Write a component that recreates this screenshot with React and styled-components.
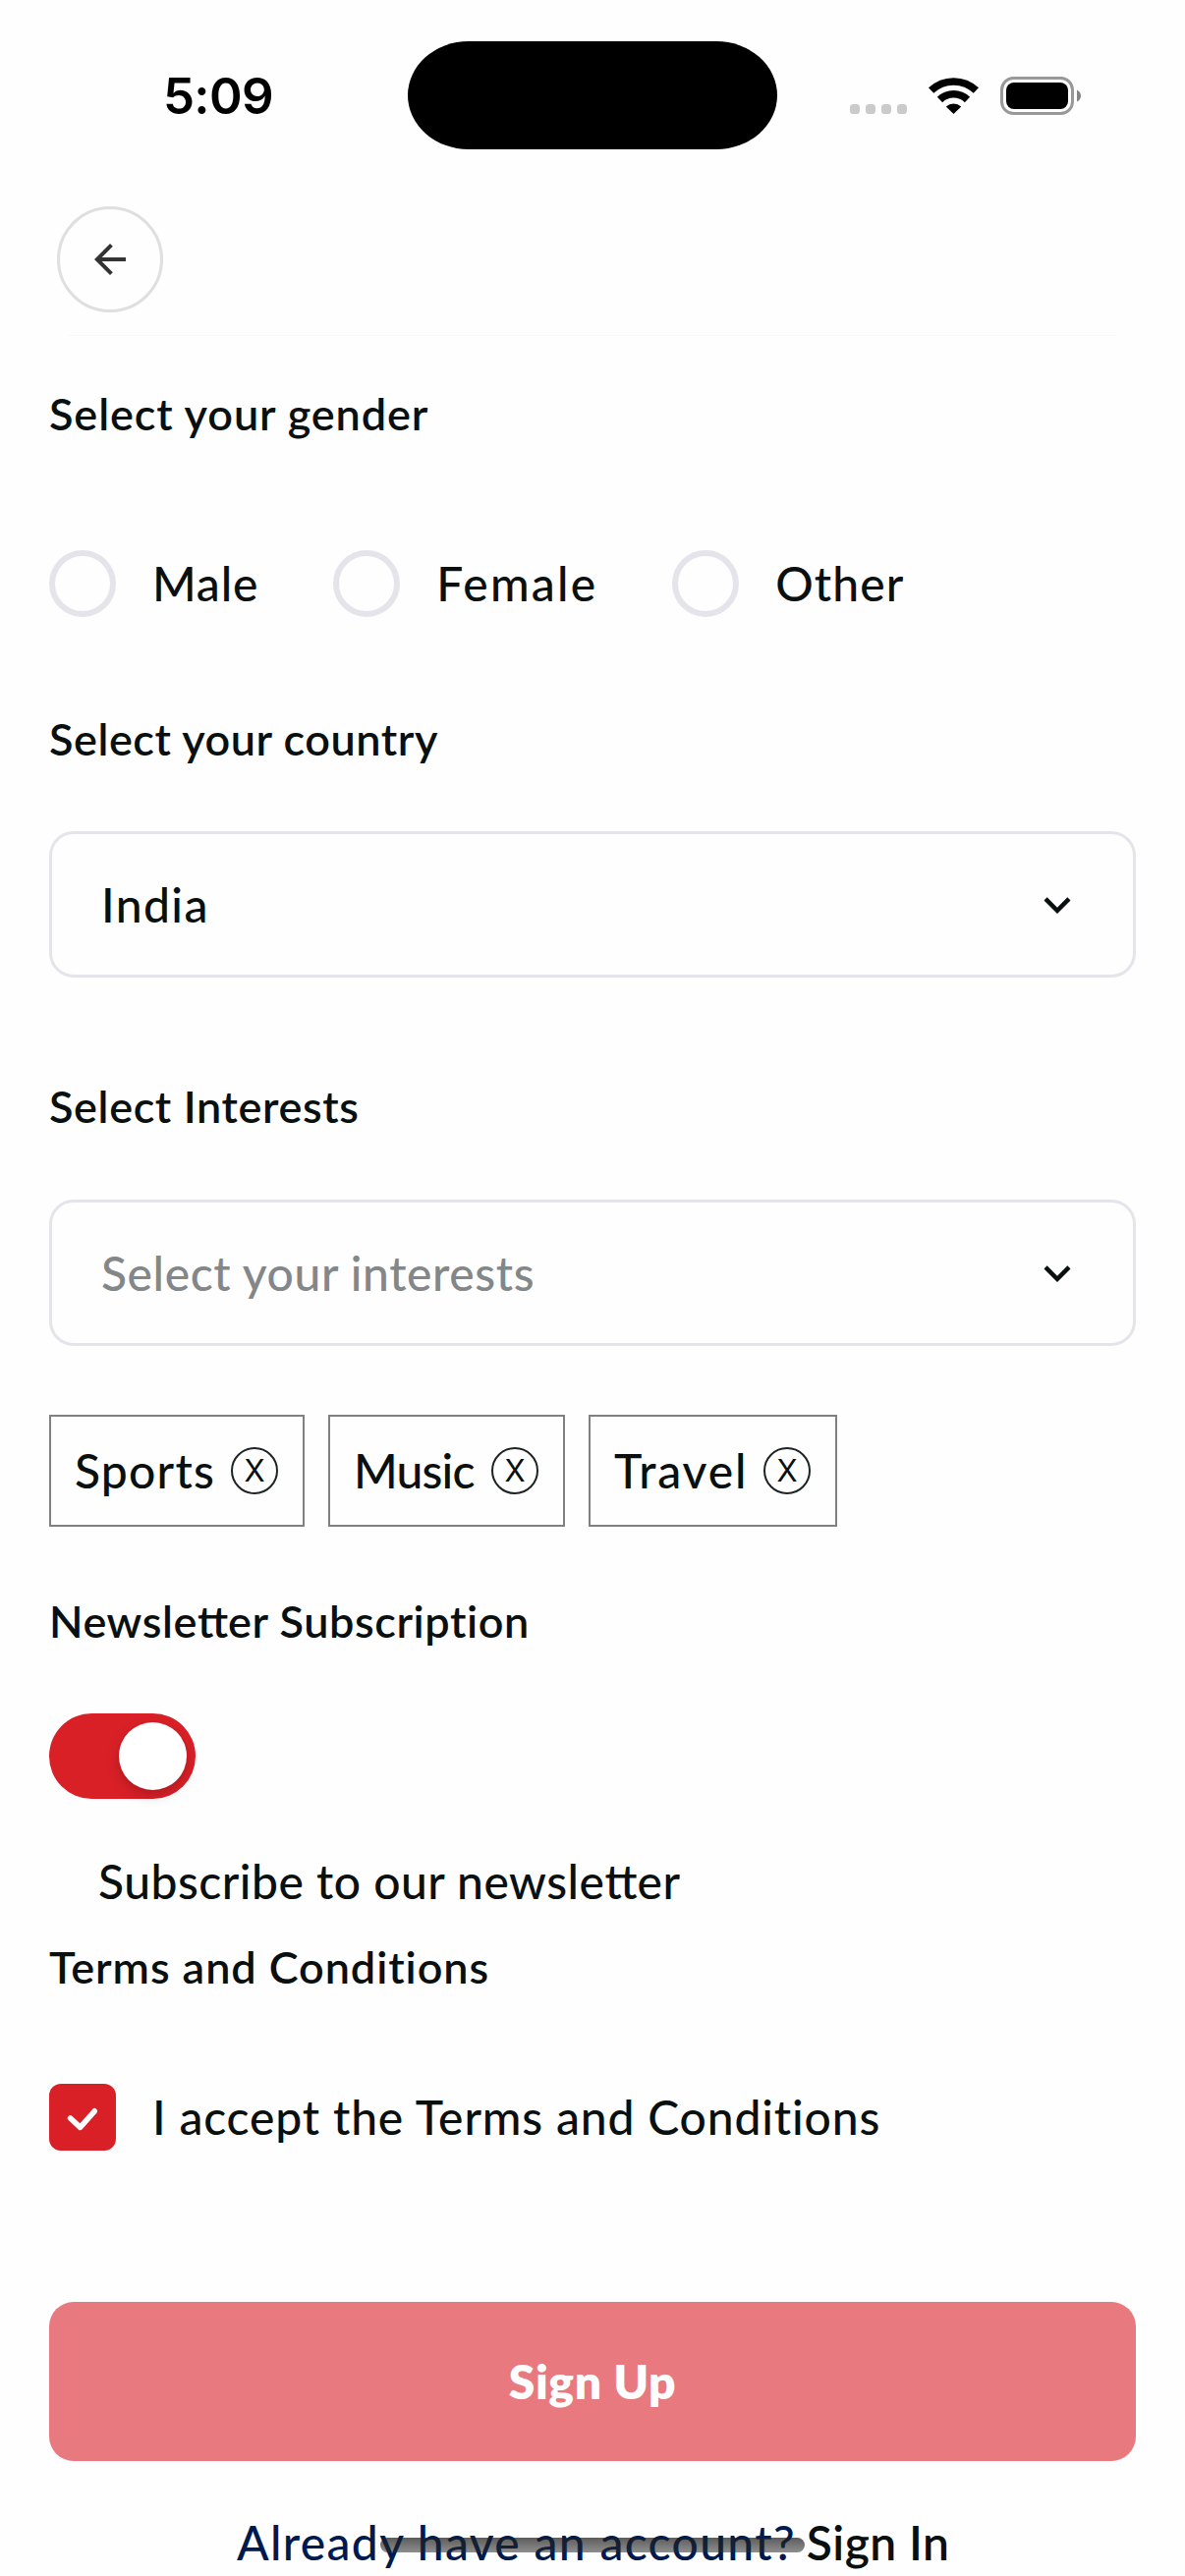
import React from 'react';
import styled, { createGlobalStyle } from 'styled-components';

const ink = '#0a100f';
const line = '#e5e4ea';
const red = '#d92027';

const GlobalStyle = createGlobalStyle`
  *, *::before, *::after { box-sizing: border-box; }
  body {
    margin: 0;
    background: #fefefe;
    color: ${ink};
    font-family: Lato, "Noto Sans", sans-serif;
  }
`;

const Screen = styled.div`
  position: relative;
  display: flex;
  flex-direction: column;
  width: 1206px;
  height: 2622px;
  overflow: hidden;
  background: #fefefe;
`;

const StatusBar = styled.header`
  display: grid;
  grid-template-columns: 414px 378px 414px;
  height: 194px;
  padding-top: 41px;
  align-items: start;
`;

const Clock = styled.div`
  padding-left: 166px;
  margin-top: 27px;
  font: 600 51px/60px Inter, sans-serif;
  letter-spacing: -0.7px;
  color: #000;
`;

const Island = styled.div`
  height: 110px;
  margin: 1px 1px 0;
  border-radius: 62px / 55px;
  background: #000;
`;

const StatusIcons = styled.svg`
  display: block;
  width: 414px;
  height: 112px;
`;

const NavBar = styled.nav`
  display: flex;
  height: 148px;
  margin: 0 70px;
  padding-top: 16px;
  border-bottom: 1px solid #f8f8f8;
`;

const BackButton = styled.button`
  display: flex;
  align-items: center;
  justify-content: center;
  width: 108px;
  height: 108px;
  margin-left: -12px;
  padding: 0;
  border: 3px solid #dfdfdf;
  border-radius: 50%;
  background: none;
`;

const Form = styled.form`
  display: flex;
  flex-direction: column;
  padding: 49px 50px 0;
`;

const Heading = styled.h2`
  margin: ${(p) => p.$top || 0}px 0 0;
  font-size: 45px;
  font-weight: 600;
  line-height: 60px;
  letter-spacing: ${(p) => p.$track}px;
  white-space: nowrap;
`;

const Text = styled.span`
  font-size: 48px;
  font-weight: ${(p) => p.$weight || 500};
  line-height: 60px;
  letter-spacing: ${(p) => p.$track || 0}px;
  color: ${(p) => p.$color || 'inherit'};
  white-space: nowrap;
`;

const Joined = styled.span`
  letter-spacing: 0;
`;

const RadioGroup = styled.div`
  display: flex;
  gap: 76px;
  margin-top: 109px;
`;

const RadioOption = styled.label`
  display: flex;
  align-items: center;
  gap: 37px;
  height: 68px;
`;

const RadioDot = styled.span`
  width: 68px;
  height: 68px;
  border: 6px solid ${line};
  border-radius: 50%;
`;

const SelectBox = styled.div`
  display: flex;
  align-items: center;
  justify-content: space-between;
  height: 149px;
  margin-top: ${(p) => p.$top}px;
  padding: 0 50px;
  border: 3px solid ${line};
  border-radius: 25px;
`;

const ChipRow = styled.div`
  display: flex;
  gap: 24px;
  margin-top: 70px;
`;

const Chip = styled.div`
  display: flex;
  align-items: center;
  justify-content: space-between;
  width: ${(p) => p.$width}px;
  height: 114px;
  padding: 0 25px 0 24px;
  border: 2px solid #808080;
`;

const ChipClose = styled.span`
  display: flex;
  align-items: center;
  justify-content: center;
  width: 48px;
  height: 48px;
  border: 2px solid #1e2423;
  border-radius: 50%;
  font: 400 31px/44px Inter, sans-serif;
`;

const Switch = styled.div`
  display: flex;
  align-items: center;
  justify-content: flex-end;
  width: 149px;
  height: 87px;
  margin-top: 64px;
  padding-right: 9px;
  border-radius: 44px;
  background: ${red};
`;

const Knob = styled.span`
  width: 69px;
  height: 69px;
  border-radius: 50%;
  background: #fff;
  box-shadow: 0 6px 14px rgba(0, 0, 0, 0.16), 0 2px 4px rgba(0, 0, 0, 0.06);
`;

const SwitchLabel = styled.div`
  display: flex;
  margin: 54px 0 0 50px;
`;

const CheckRow = styled.label`
  display: flex;
  align-items: center;
  gap: 37px;
  height: 68px;
  margin-top: 89px;
`;

const CheckBox = styled.span`
  display: flex;
  width: 68px;
  height: 68px;
  border-radius: 12px;
  background: ${red};
`;

const SubmitButton = styled.button`
  display: flex;
  align-items: center;
  justify-content: center;
  height: 162px;
  margin-top: 154px;
  padding: 0;
  border: 0;
  border-radius: 25px;
  background: #e8797f;
  color: #fff;
  font-family: inherit;
`;

const Footer = styled.div`
  display: flex;
  gap: 11px;
  margin: 53px 0 0 191px;
`;

const HomeIndicator = styled.div`
  position: absolute;
  left: 387px;
  top: 2583px;
  width: 432px;
  height: 15px;
  border-radius: 8px;
  background: linear-gradient(rgba(30, 30, 30, 0.72), rgba(40, 40, 40, 0.52));
`;

const genders = [
  { label: 'Male', track: 0.8 },
  { label: 'Female', track: 2.2 },
  { label: 'Other', track: 1.06 },
];

const interests = [
  { label: 'Sports', track: 1.22, width: 260 },
  { label: 'Music', track: -0.8, width: 241 },
  { label: 'Travel', track: 1.88, width: 253 },
];

function ArrowBack() {
  return (
    <svg width="48" height="48" viewBox="0 0 24 24" fill="#333">
      <path d="M20 11H7.83l5.59-5.59L12 4l-8 8 8 8 1.41-1.41L7.83 13H20v-2z" />
    </svg>
  );
}

function Chevron() {
  return (
    <svg width="54" height="54" viewBox="0 0 24 24" fill={ink}>
      <path d="M7.41 8.59 12 13.17l4.59-4.58L18 10l-6 6-6-6z" />
    </svg>
  );
}

function CheckMark() {
  return (
    <svg width="68" height="68" viewBox="0 0 68 68" fill="none" stroke="#fff" strokeWidth="5.6" strokeLinecap="round" strokeLinejoin="round">
      <path d="M21.6 35 31.6 44.4 46.2 27.8" />
    </svg>
  );
}

function Indicators() {
  return (
    <StatusIcons viewBox="792 41 414 112">
      {[865, 881, 897, 913].map((x) => (
        <rect key={x} x={x} y="106" width="10" height="10" rx="3.6" fill="#cacaca" />
      ))}
      <g fill="none" stroke="#000" strokeWidth="7.6">
        <path d="M947.6 92.1A33.2 33.2 0 0 1 993.4 92.1" />
        <path d="M956.5 101.4A20.2 20.2 0 0 1 984.5 101.4" />
      </g>
      <path d="M970.5 116 962.8 108.4A11.4 11.4 0 0 1 978.2 108.4Z" />
      <rect x="1019.5" y="79.5" width="72" height="36" rx="12" fill="none" stroke="#999" strokeWidth="3" />
      <rect x="1024" y="84" width="63" height="27" rx="8" />
      <path d="M1096 91.5Q1100 93.5 1100 97.5T1096 103.5Z" fill="#858585" />
    </StatusIcons>
  );
}

export default function App() {
  return (
    <Screen>
      <GlobalStyle />
      <StatusBar>
        <Clock>5:09</Clock>
        <Island />
        <Indicators />
      </StatusBar>
      <NavBar>
        <BackButton type="button" aria-label="Back">
          <ArrowBack />
        </BackButton>
      </NavBar>
      <Form>
        <Heading $track={0.9}>Select your gender</Heading>
        <RadioGroup>
          {genders.map((g) => (
            <RadioOption key={g.label}>
              <RadioDot />
              <Text $track={g.track}>{g.label}</Text>
            </RadioOption>
          ))}
        </RadioGroup>
        <Heading $top={94} $track={0.55}>Select your country</Heading>
        <SelectBox $top={64}>
          <Text $track={1.4}>India</Text>
          <Chevron />
        </SelectBox>
        <Heading $top={101} $track={0.62}>Select Interests</Heading>
        <SelectBox $top={65}>
          <Text $track={0.6} $color="#848787">Select your interests</Text>
          <Chevron />
        </SelectBox>
        <ChipRow>
          {interests.map((c) => (
            <Chip key={c.label} $width={c.width}>
              <Text $track={c.track}>{c.label}</Text>
              <ChipClose>X</ChipClose>
            </Chip>
          ))}
        </ChipRow>
        <Heading $top={66} $track={0.57}>
          Newsle<Joined>tt</Joined>er Subscription
        </Heading>
        <Switch>
          <Knob />
        </Switch>
        <SwitchLabel>
          <Text $track={0.5}>
            Subscribe to our newsle<Joined>tt</Joined>er
          </Text>
        </SwitchLabel>
        <Heading $top={27} $track={0.92}>Terms and Conditions</Heading>
        <CheckRow>
          <CheckBox>
            <CheckMark />
          </CheckBox>
          <Text $track={0.84}>I accept the Terms and Conditions</Text>
        </CheckRow>
        <SubmitButton type="button">
          <Text $weight={800} $track={0.62}>Sign Up</Text>
        </SubmitButton>
        <Footer>
          <Text $track={1.34} $color="#001a4f">Already have an account?</Text>
          <Text $weight={600} $track={0.45}>Sign In</Text>
        </Footer>
      </Form>
      <HomeIndicator />
    </Screen>
  );
}
